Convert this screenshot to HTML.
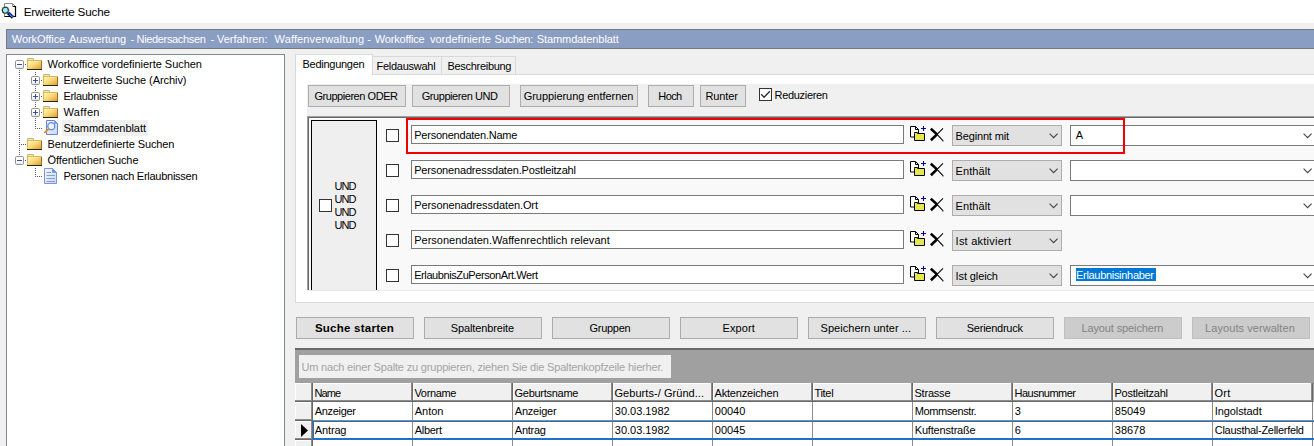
<!DOCTYPE html>
<html lang="de"><head><meta charset="utf-8"><title>Erweiterte Suche</title>
<style>
html,body{margin:0;padding:0}
body{width:1314px;height:446px;overflow:hidden;background:#f0f0f0;position:relative;font-family:"Liberation Sans", sans-serif;font-size:11px}
#r{position:absolute;left:0;top:0;width:1314px;height:446px;overflow:hidden}
#r div,#r svg,#r span{position:absolute;display:block}
.t{white-space:pre;line-height:16px;height:16px}
</style></head><body><div id="r">
<div style="left:0px;top:0px;width:1314px;height:23px;background:#fff"></div>
<svg style="left:0;top:0" width="20" height="20" viewBox="0 0 20 20">
<path d="M4.500 3.500H12.500L15.500 6.500V16.500H4.500Z" fill="#fff" stroke="#8a8a8a" stroke-width="1"/>
<path d="M12.500 3.500V6.500H15.500" fill="none" stroke="#8a8a8a" stroke-width="1"/>
<path d="M13 6.500H15.500V16.500H4.500" fill="none" stroke="#000" stroke-width="1.200"/>
<path d="M8 12.800L13 17.500" stroke="#000" stroke-width="3.200" stroke-linecap="butt"/>
<path d="M8.600 12.600L13.300 17" stroke="#1030ff" stroke-width="1.800"/>
<path d="M9.600 14.600L12.600 17.300" stroke="#30e8ff" stroke-width=".8"/>
<circle cx="5.400" cy="10.200" r="3" fill="#8ff4f4" stroke="#222" stroke-width="1.100"/>
<circle cx="5.400" cy="10.200" r="3.700" fill="none" stroke="#777" stroke-width=".5"/>
</svg>
<div style="left:6px;top:29px;width:1320px;height:20px;background:#8a9dc3;border:1px solid #787878;box-sizing:border-box;border-right:none"></div>
<div style="left:6px;top:54px;width:279px;height:400px;background:#fff;border:1px solid #828790;box-sizing:border-box"></div>
<svg style="left:0;top:0" width="0" height="0"><defs><linearGradient id="fg" x1="0" y1="0" x2="1" y2="1"><stop offset="0" stop-color="#fff6c4"/><stop offset="0.45" stop-color="#fbdb7e"/><stop offset="1" stop-color="#e09a22"/></linearGradient>
<linearGradient id="dg" x1="0" y1="0" x2="1" y2="1"><stop offset="0" stop-color="#f2f8ff"/><stop offset="1" stop-color="#c4dcf6"/></linearGradient>
<linearGradient id="eb" x1="0" y1="0" x2="0" y2="1"><stop offset="0.5" stop-color="#fff"/><stop offset="1" stop-color="#e4e4e4"/></linearGradient></defs></svg>
<div style="left:19px;top:70px;width:1px;height:86px;background:repeating-linear-gradient(to bottom,#5a5a5a 0 1px,transparent 1px 2px)"></div>
<div style="left:35px;top:72px;width:1px;height:57px;background:repeating-linear-gradient(to bottom,#5a5a5a 0 1px,transparent 1px 2px)"></div>
<div style="left:35px;top:168px;width:1px;height:9px;background:repeating-linear-gradient(to bottom,#5a5a5a 0 1px,transparent 1px 2px)"></div>
<div style="left:25px;top:64px;width:1px;height:1px;background:repeating-linear-gradient(to right,#5a5a5a 0 1px,transparent 1px 2px)"></div>
<div style="left:41px;top:80px;width:1px;height:1px;background:repeating-linear-gradient(to right,#5a5a5a 0 1px,transparent 1px 2px)"></div>
<div style="left:41px;top:96px;width:1px;height:1px;background:repeating-linear-gradient(to right,#5a5a5a 0 1px,transparent 1px 2px)"></div>
<div style="left:41px;top:112px;width:1px;height:1px;background:repeating-linear-gradient(to right,#5a5a5a 0 1px,transparent 1px 2px)"></div>
<div style="left:35px;top:128px;width:7px;height:1px;background:repeating-linear-gradient(to right,#5a5a5a 0 1px,transparent 1px 2px)"></div>
<div style="left:19px;top:144px;width:7px;height:1px;background:repeating-linear-gradient(to right,#5a5a5a 0 1px,transparent 1px 2px)"></div>
<div style="left:25px;top:160px;width:1px;height:1px;background:repeating-linear-gradient(to right,#5a5a5a 0 1px,transparent 1px 2px)"></div>
<div style="left:35px;top:176px;width:7px;height:1px;background:repeating-linear-gradient(to right,#5a5a5a 0 1px,transparent 1px 2px)"></div>
<div style="left:62px;top:120px;width:86px;height:16px;background:#f0f0f0"></div>
<svg style="left:15px;top:60px" width="9" height="9" viewBox="0 0 9 9"><rect x=".5" y=".5" width="8" height="8" rx="1.200" fill="url(#eb)" stroke="#919191"/><path d="M2 4.500h5" stroke="#3b4f9e" stroke-width="1"/></svg>
<svg style="left:27px;top:56px" width="16" height="16" viewBox="0 0 16 16">
<path d="M.5 4.500V3Q.5 2.500 1 2.500H6Q6.500 2.500 6.500 3V4.500" fill="#fbeeb2" stroke="#cdb06a" stroke-width="1"/>
<rect x=".5" y="4.500" width="14" height="9" fill="url(#fg)" stroke="#d9b55e" stroke-width="1"/>
<path d="M0 13.500H15" stroke="#2e2208" stroke-width="1"/><path d="M14.500 5V13" stroke="#94701f" stroke-width="1"/>
</svg>
<svg style="left:31px;top:76px" width="9" height="9" viewBox="0 0 9 9"><rect x=".5" y=".5" width="8" height="8" rx="1.200" fill="url(#eb)" stroke="#919191"/><path d="M2 4.500h5" stroke="#3b4f9e" stroke-width="1"/><path d="M4.500 2v5" stroke="#3b4f9e" stroke-width="1"/></svg>
<svg style="left:43px;top:72px" width="16" height="16" viewBox="0 0 16 16">
<path d="M.5 4.500V3Q.5 2.500 1 2.500H6Q6.500 2.500 6.500 3V4.500" fill="#fbeeb2" stroke="#cdb06a" stroke-width="1"/>
<rect x=".5" y="4.500" width="14" height="9" fill="url(#fg)" stroke="#d9b55e" stroke-width="1"/>
<path d="M0 13.500H15" stroke="#2e2208" stroke-width="1"/><path d="M14.500 5V13" stroke="#94701f" stroke-width="1"/>
</svg>
<svg style="left:31px;top:92px" width="9" height="9" viewBox="0 0 9 9"><rect x=".5" y=".5" width="8" height="8" rx="1.200" fill="url(#eb)" stroke="#919191"/><path d="M2 4.500h5" stroke="#3b4f9e" stroke-width="1"/><path d="M4.500 2v5" stroke="#3b4f9e" stroke-width="1"/></svg>
<svg style="left:43px;top:88px" width="16" height="16" viewBox="0 0 16 16">
<path d="M.5 4.500V3Q.5 2.500 1 2.500H6Q6.500 2.500 6.500 3V4.500" fill="#fbeeb2" stroke="#cdb06a" stroke-width="1"/>
<rect x=".5" y="4.500" width="14" height="9" fill="url(#fg)" stroke="#d9b55e" stroke-width="1"/>
<path d="M0 13.500H15" stroke="#2e2208" stroke-width="1"/><path d="M14.500 5V13" stroke="#94701f" stroke-width="1"/>
</svg>
<svg style="left:31px;top:108px" width="9" height="9" viewBox="0 0 9 9"><rect x=".5" y=".5" width="8" height="8" rx="1.200" fill="url(#eb)" stroke="#919191"/><path d="M2 4.500h5" stroke="#3b4f9e" stroke-width="1"/><path d="M4.500 2v5" stroke="#3b4f9e" stroke-width="1"/></svg>
<svg style="left:43px;top:104px" width="16" height="16" viewBox="0 0 16 16">
<path d="M.5 4.500V3Q.5 2.500 1 2.500H6Q6.500 2.500 6.500 3V4.500" fill="#fbeeb2" stroke="#cdb06a" stroke-width="1"/>
<rect x=".5" y="4.500" width="14" height="9" fill="url(#fg)" stroke="#d9b55e" stroke-width="1"/>
<path d="M0 13.500H15" stroke="#2e2208" stroke-width="1"/><path d="M14.500 5V13" stroke="#94701f" stroke-width="1"/>
</svg>
<svg style="left:43px;top:120px" width="16" height="16" viewBox="0 0 16 16">
<path d="M3.500 .5h8l3 3v11h-11z" fill="url(#dg)" stroke="#6f82d2" stroke-width="1"/>
<path d="M11.500 .5v3h3z" fill="#5a9cec" stroke="#6f8fe0" stroke-width=".5"/>
<circle cx="8.300" cy="6.200" r="3.500" fill="#e8f4ff" stroke="#6a88da" stroke-width="1.300"/>
<path d="M5.600 9l-3.800 3.400" stroke="#e08a2a" stroke-width="1.700" stroke-linecap="round"/></svg>
<svg style="left:27px;top:136px" width="16" height="16" viewBox="0 0 16 16">
<path d="M.5 4.500V3Q.5 2.500 1 2.500H6Q6.500 2.500 6.500 3V4.500" fill="#fbeeb2" stroke="#cdb06a" stroke-width="1"/>
<rect x=".5" y="4.500" width="14" height="9" fill="url(#fg)" stroke="#d9b55e" stroke-width="1"/>
<path d="M0 13.500H15" stroke="#2e2208" stroke-width="1"/><path d="M14.500 5V13" stroke="#94701f" stroke-width="1"/>
</svg>
<svg style="left:15px;top:156px" width="9" height="9" viewBox="0 0 9 9"><rect x=".5" y=".5" width="8" height="8" rx="1.200" fill="url(#eb)" stroke="#919191"/><path d="M2 4.500h5" stroke="#3b4f9e" stroke-width="1"/></svg>
<svg style="left:27px;top:152px" width="16" height="16" viewBox="0 0 16 16">
<path d="M.5 4.500V3Q.5 2.500 1 2.500H6Q6.500 2.500 6.500 3V4.500" fill="#fbeeb2" stroke="#cdb06a" stroke-width="1"/>
<rect x=".5" y="4.500" width="14" height="9" fill="url(#fg)" stroke="#d9b55e" stroke-width="1"/>
<path d="M0 13.500H15" stroke="#2e2208" stroke-width="1"/><path d="M14.500 5V13" stroke="#94701f" stroke-width="1"/>
</svg>
<svg style="left:44px;top:168px" width="14" height="16" viewBox="0 0 14 16">
<path d="M.5 .5h8l4 4v11h-12z" fill="url(#dg)" stroke="#8191d8" stroke-width="1"/>
<path d="M8.500 .5v4h4z" fill="#4f97ea" stroke="#6f8fe0" stroke-width=".6"/>
<path d="M2.500 4.500h4.500M2.500 7.500h8.500M2.500 10.500h8.500M2.500 13.500h8.500" stroke="#8e9ad6" stroke-width="1"/></svg>
<div style="left:295px;top:74px;width:1030px;height:229px;background:#fff;border:1px solid #dadada;box-sizing:border-box;border-right:none"></div>
<div style="left:372px;top:56px;width:70px;height:19px;background:#f0f0f0;border:1px solid #d9d9d9;box-sizing:border-box;border-bottom:1px solid #dadada"></div>
<div style="left:441px;top:56px;width:75px;height:19px;background:#f0f0f0;border:1px solid #d9d9d9;box-sizing:border-box;border-bottom:1px solid #dadada"></div>
<div style="left:295px;top:54px;width:78px;height:21px;background:#fff;border:1px solid #d9d9d9;border-bottom:none;box-sizing:border-box"></div>
<div style="left:307px;top:84px;width:1010px;height:207px;background:#f0f0f0"></div>
<div style="left:308px;top:85px;width:98px;height:22px;background:#e1e1e1;border:1px solid #adadad;box-sizing:border-box"></div>
<div style="left:412px;top:85px;width:98px;height:22px;background:#e1e1e1;border:1px solid #adadad;box-sizing:border-box"></div>
<div style="left:520px;top:85px;width:118px;height:22px;background:#e1e1e1;border:1px solid #adadad;box-sizing:border-box"></div>
<div style="left:648px;top:85px;width:46px;height:22px;background:#e1e1e1;border:1px solid #adadad;box-sizing:border-box"></div>
<div style="left:700px;top:85px;width:46px;height:22px;background:#e1e1e1;border:1px solid #adadad;box-sizing:border-box"></div>
<svg style="left:759px;top:88px" width="13" height="13" viewBox="0 0 13 13"><rect x=".5" y=".5" width="12" height="12" fill="#fff" stroke="#333"/><path d="M2.200 6.300L5.100 9.200L10.800 3.200" fill="none" stroke="#2a2a2a" stroke-width="1.300"/></svg>
<div style="left:307px;top:116px;width:1010px;height:180px;background:#f9f9f9;border-left:1px solid #a0a0a0;border-top:1px solid #a0a0a0;box-sizing:border-box"></div>
<div style="left:308px;top:117px;width:1010px;height:180px;background:#f9f9f9;border-left:1px solid #696969;border-top:1px solid #696969;box-sizing:border-box"></div>
<div style="left:311px;top:120px;width:66px;height:180px;background:#efefef;border:1px solid #000;box-sizing:border-box"></div>
<svg style="left:319px;top:199px" width="13" height="13" viewBox="0 0 13 13"><rect x=".5" y=".5" width="12" height="12" fill="#fff" stroke="#333"/></svg>
<svg style="left:386px;top:129px" width="13" height="13" viewBox="0 0 13 13"><rect x=".5" y=".5" width="12" height="12" fill="#fff" stroke="#333"/></svg>
<div style="left:411px;top:125px;width:493px;height:19px;background:#fff;border:1px solid #7a7a7a;box-sizing:border-box"></div>
<svg style="left:910px;top:126px" width="17" height="16" viewBox="0 0 17 16">
<path d="M.5 .5h5l3 3v7.500h-8z" fill="#fff" stroke="#000" stroke-width="1"/>
<path d="M5.500 .5v3h3" fill="none" stroke="#000" stroke-width="1"/>
<path d="M4.500 7.500v-1h3v1h7v7h-10z" fill="#e6e650" stroke="#000" stroke-width="1"/>
<path d="M11 2.500h5M13.500 0v5" stroke="#0000a8" stroke-width="1.100"/>
</svg>
<svg style="left:930px;top:127px" width="14" height="15" viewBox="0 0 14 15">
<path d="M.8 1.600L7 7.400" stroke="#000" stroke-width="2.600"/><path d="M7 7.400L12.700 13.400" stroke="#000" stroke-width="1.100"/>
<path d="M13 1.300L7 7.400" stroke="#000" stroke-width="1.100"/><path d="M7 7.400L.9 13.300" stroke="#000" stroke-width="2.600"/>
<rect x="12.300" y="13.200" width="1.200" height="1.200" fill="#000"/></svg>
<div style="left:952px;top:125px;width:110px;height:21px;background:#e1e1e1;border:1px solid #adadad;box-sizing:border-box"></div>
<svg style="left:1048.5px;top:133px" width="10" height="6" viewBox="0 0 10 6"><path d="M.6 .7l4 4l4-4" fill="none" stroke="#444" stroke-width="1.100"/></svg>
<div style="left:1070px;top:125px;width:260px;height:21px;background:#fff;border:1px solid #7a7a7a;box-sizing:border-box"></div>
<svg style="left:1303.4px;top:133px" width="10" height="6" viewBox="0 0 10 6"><path d="M.6 .7l4 4l4-4" fill="none" stroke="#444" stroke-width="1.100"/></svg>
<svg style="left:386px;top:164px" width="13" height="13" viewBox="0 0 13 13"><rect x=".5" y=".5" width="12" height="12" fill="#fff" stroke="#333"/></svg>
<div style="left:411px;top:160px;width:493px;height:19px;background:#fff;border:1px solid #7a7a7a;box-sizing:border-box"></div>
<svg style="left:910px;top:161px" width="17" height="16" viewBox="0 0 17 16">
<path d="M.5 .5h5l3 3v7.500h-8z" fill="#fff" stroke="#000" stroke-width="1"/>
<path d="M5.500 .5v3h3" fill="none" stroke="#000" stroke-width="1"/>
<path d="M4.500 7.500v-1h3v1h7v7h-10z" fill="#e6e650" stroke="#000" stroke-width="1"/>
<path d="M11 2.500h5M13.500 0v5" stroke="#0000a8" stroke-width="1.100"/>
</svg>
<svg style="left:930px;top:162px" width="14" height="15" viewBox="0 0 14 15">
<path d="M.8 1.600L7 7.400" stroke="#000" stroke-width="2.600"/><path d="M7 7.400L12.700 13.400" stroke="#000" stroke-width="1.100"/>
<path d="M13 1.300L7 7.400" stroke="#000" stroke-width="1.100"/><path d="M7 7.400L.9 13.300" stroke="#000" stroke-width="2.600"/>
<rect x="12.300" y="13.200" width="1.200" height="1.200" fill="#000"/></svg>
<div style="left:952px;top:160px;width:110px;height:21px;background:#e1e1e1;border:1px solid #adadad;box-sizing:border-box"></div>
<svg style="left:1048.5px;top:168px" width="10" height="6" viewBox="0 0 10 6"><path d="M.6 .7l4 4l4-4" fill="none" stroke="#444" stroke-width="1.100"/></svg>
<div style="left:1070px;top:160px;width:260px;height:21px;background:#fff;border:1px solid #7a7a7a;box-sizing:border-box"></div>
<svg style="left:1303.4px;top:168px" width="10" height="6" viewBox="0 0 10 6"><path d="M.6 .7l4 4l4-4" fill="none" stroke="#444" stroke-width="1.100"/></svg>
<svg style="left:386px;top:199px" width="13" height="13" viewBox="0 0 13 13"><rect x=".5" y=".5" width="12" height="12" fill="#fff" stroke="#333"/></svg>
<div style="left:411px;top:195px;width:493px;height:19px;background:#fff;border:1px solid #7a7a7a;box-sizing:border-box"></div>
<svg style="left:910px;top:196px" width="17" height="16" viewBox="0 0 17 16">
<path d="M.5 .5h5l3 3v7.500h-8z" fill="#fff" stroke="#000" stroke-width="1"/>
<path d="M5.500 .5v3h3" fill="none" stroke="#000" stroke-width="1"/>
<path d="M4.500 7.500v-1h3v1h7v7h-10z" fill="#e6e650" stroke="#000" stroke-width="1"/>
<path d="M11 2.500h5M13.500 0v5" stroke="#0000a8" stroke-width="1.100"/>
</svg>
<svg style="left:930px;top:197px" width="14" height="15" viewBox="0 0 14 15">
<path d="M.8 1.600L7 7.400" stroke="#000" stroke-width="2.600"/><path d="M7 7.400L12.700 13.400" stroke="#000" stroke-width="1.100"/>
<path d="M13 1.300L7 7.400" stroke="#000" stroke-width="1.100"/><path d="M7 7.400L.9 13.300" stroke="#000" stroke-width="2.600"/>
<rect x="12.300" y="13.200" width="1.200" height="1.200" fill="#000"/></svg>
<div style="left:952px;top:195px;width:110px;height:21px;background:#e1e1e1;border:1px solid #adadad;box-sizing:border-box"></div>
<svg style="left:1048.5px;top:203px" width="10" height="6" viewBox="0 0 10 6"><path d="M.6 .7l4 4l4-4" fill="none" stroke="#444" stroke-width="1.100"/></svg>
<div style="left:1070px;top:195px;width:260px;height:21px;background:#fff;border:1px solid #7a7a7a;box-sizing:border-box"></div>
<svg style="left:1303.4px;top:203px" width="10" height="6" viewBox="0 0 10 6"><path d="M.6 .7l4 4l4-4" fill="none" stroke="#444" stroke-width="1.100"/></svg>
<svg style="left:386px;top:234px" width="13" height="13" viewBox="0 0 13 13"><rect x=".5" y=".5" width="12" height="12" fill="#fff" stroke="#333"/></svg>
<div style="left:411px;top:230px;width:493px;height:19px;background:#fff;border:1px solid #7a7a7a;box-sizing:border-box"></div>
<svg style="left:910px;top:231px" width="17" height="16" viewBox="0 0 17 16">
<path d="M.5 .5h5l3 3v7.500h-8z" fill="#fff" stroke="#000" stroke-width="1"/>
<path d="M5.500 .5v3h3" fill="none" stroke="#000" stroke-width="1"/>
<path d="M4.500 7.500v-1h3v1h7v7h-10z" fill="#e6e650" stroke="#000" stroke-width="1"/>
<path d="M11 2.500h5M13.500 0v5" stroke="#0000a8" stroke-width="1.100"/>
</svg>
<svg style="left:930px;top:232px" width="14" height="15" viewBox="0 0 14 15">
<path d="M.8 1.600L7 7.400" stroke="#000" stroke-width="2.600"/><path d="M7 7.400L12.700 13.400" stroke="#000" stroke-width="1.100"/>
<path d="M13 1.300L7 7.400" stroke="#000" stroke-width="1.100"/><path d="M7 7.400L.9 13.300" stroke="#000" stroke-width="2.600"/>
<rect x="12.300" y="13.200" width="1.200" height="1.200" fill="#000"/></svg>
<div style="left:952px;top:230px;width:110px;height:21px;background:#e1e1e1;border:1px solid #adadad;box-sizing:border-box"></div>
<svg style="left:1048.5px;top:238px" width="10" height="6" viewBox="0 0 10 6"><path d="M.6 .7l4 4l4-4" fill="none" stroke="#444" stroke-width="1.100"/></svg>
<svg style="left:386px;top:269px" width="13" height="13" viewBox="0 0 13 13"><rect x=".5" y=".5" width="12" height="12" fill="#fff" stroke="#333"/></svg>
<div style="left:411px;top:265px;width:493px;height:19px;background:#fff;border:1px solid #7a7a7a;box-sizing:border-box"></div>
<svg style="left:910px;top:266px" width="17" height="16" viewBox="0 0 17 16">
<path d="M.5 .5h5l3 3v7.500h-8z" fill="#fff" stroke="#000" stroke-width="1"/>
<path d="M5.500 .5v3h3" fill="none" stroke="#000" stroke-width="1"/>
<path d="M4.500 7.500v-1h3v1h7v7h-10z" fill="#e6e650" stroke="#000" stroke-width="1"/>
<path d="M11 2.500h5M13.500 0v5" stroke="#0000a8" stroke-width="1.100"/>
</svg>
<svg style="left:930px;top:267px" width="14" height="15" viewBox="0 0 14 15">
<path d="M.8 1.600L7 7.400" stroke="#000" stroke-width="2.600"/><path d="M7 7.400L12.700 13.400" stroke="#000" stroke-width="1.100"/>
<path d="M13 1.300L7 7.400" stroke="#000" stroke-width="1.100"/><path d="M7 7.400L.9 13.300" stroke="#000" stroke-width="2.600"/>
<rect x="12.300" y="13.200" width="1.200" height="1.200" fill="#000"/></svg>
<div style="left:952px;top:265px;width:110px;height:21px;background:#e1e1e1;border:1px solid #adadad;box-sizing:border-box"></div>
<svg style="left:1048.5px;top:273px" width="10" height="6" viewBox="0 0 10 6"><path d="M.6 .7l4 4l4-4" fill="none" stroke="#444" stroke-width="1.100"/></svg>
<div style="left:1070px;top:265px;width:260px;height:21px;background:#fff;border:1px solid #7a7a7a;box-sizing:border-box"></div>
<svg style="left:1303.4px;top:273px" width="10" height="6" viewBox="0 0 10 6"><path d="M.6 .7l4 4l4-4" fill="none" stroke="#444" stroke-width="1.100"/></svg>
<div style="left:1076px;top:268px;width:80px;height:13px;background:#0078d7"></div>
<div style="left:406px;top:118px;width:719px;height:36px;border:2px solid #f00000;box-sizing:border-box"></div>
<div style="left:296px;top:290px;width:1030px;height:12px;background:#fff"></div>
<div style="left:307px;top:290px;width:1010px;height:1px;background:#e9e9e9"></div>
<div style="left:295px;top:302px;width:1030px;height:1px;background:#dadada"></div>
<div style="left:295px;top:303px;width:1030px;height:45px;background:#f0f0f0"></div>
<div style="left:296px;top:317px;width:118px;height:22px;background:#e1e1e1;border:1px solid #adadad;box-sizing:border-box"></div>
<div style="left:424px;top:317px;width:118px;height:22px;background:#e1e1e1;border:1px solid #adadad;box-sizing:border-box"></div>
<div style="left:552px;top:317px;width:118px;height:22px;background:#e1e1e1;border:1px solid #adadad;box-sizing:border-box"></div>
<div style="left:680px;top:317px;width:118px;height:22px;background:#e1e1e1;border:1px solid #adadad;box-sizing:border-box"></div>
<div style="left:808px;top:317px;width:118px;height:22px;background:#e1e1e1;border:1px solid #adadad;box-sizing:border-box"></div>
<div style="left:936px;top:317px;width:118px;height:22px;background:#e1e1e1;border:1px solid #adadad;box-sizing:border-box"></div>
<div style="left:1064px;top:317px;width:118px;height:22px;background:#cccccc;border:1px solid #bfbfbf;box-sizing:border-box"></div>
<div style="left:1192px;top:317px;width:118px;height:22px;background:#cccccc;border:1px solid #bfbfbf;box-sizing:border-box"></div>
<div style="left:295px;top:348px;width:1030px;height:110px;background:#a0a0a0;border-top:2px solid #696969;box-sizing:border-box"></div>
<div style="left:299px;top:355px;width:372px;height:23px;background:#f0f0f0"></div>
<div style="left:295px;top:402px;width:1030px;height:60px;background:#fff"></div>
<div style="left:295px;top:383px;width:18px;height:19px;background:#f0f0f0;box-shadow:inset -1px -1px 0 #696969,inset -2px -2px 0 #8c8c8c,inset 1px 1px 0 #fff;"></div>
<div style="left:313px;top:383px;width:100px;height:19px;background:#f0f0f0;box-shadow:inset -1px -1px 0 #696969,inset -2px -2px 0 #8c8c8c,inset 1px 1px 0 #fff;"></div>
<div style="left:413px;top:383px;width:100px;height:19px;background:#f0f0f0;box-shadow:inset -1px -1px 0 #696969,inset -2px -2px 0 #8c8c8c,inset 1px 1px 0 #fff;"></div>
<div style="left:513px;top:383px;width:100px;height:19px;background:#f0f0f0;box-shadow:inset -1px -1px 0 #696969,inset -2px -2px 0 #8c8c8c,inset 1px 1px 0 #fff;"></div>
<div style="left:613px;top:383px;width:100px;height:19px;background:#f0f0f0;box-shadow:inset -1px -1px 0 #696969,inset -2px -2px 0 #8c8c8c,inset 1px 1px 0 #fff;"></div>
<div style="left:713px;top:383px;width:100px;height:19px;background:#f0f0f0;box-shadow:inset -1px -1px 0 #696969,inset -2px -2px 0 #8c8c8c,inset 1px 1px 0 #fff;"></div>
<div style="left:813px;top:383px;width:100px;height:19px;background:#f0f0f0;box-shadow:inset -1px -1px 0 #696969,inset -2px -2px 0 #8c8c8c,inset 1px 1px 0 #fff;"></div>
<div style="left:913px;top:383px;width:100px;height:19px;background:#f0f0f0;box-shadow:inset -1px -1px 0 #696969,inset -2px -2px 0 #8c8c8c,inset 1px 1px 0 #fff;"></div>
<div style="left:1013px;top:383px;width:100px;height:19px;background:#f0f0f0;box-shadow:inset -1px -1px 0 #696969,inset -2px -2px 0 #8c8c8c,inset 1px 1px 0 #fff;"></div>
<div style="left:1113px;top:383px;width:100px;height:19px;background:#f0f0f0;box-shadow:inset -1px -1px 0 #696969,inset -2px -2px 0 #8c8c8c,inset 1px 1px 0 #fff;"></div>
<div style="left:1213px;top:383px;width:100px;height:19px;background:#f0f0f0;box-shadow:inset -1px -1px 0 #696969,inset -2px -2px 0 #8c8c8c,inset 1px 1px 0 #fff;"></div>
<div style="left:295px;top:402px;width:18px;height:19px;background:#f0f0f0;box-shadow:inset -1px -1px 0 #696969,inset -2px -2px 0 #8c8c8c,inset 1px 1px 0 #fff;"></div>
<div style="left:295px;top:421px;width:18px;height:19px;background:#f0f0f0;box-shadow:inset -1px -1px 0 #696969,inset -2px -2px 0 #8c8c8c,inset 1px 1px 0 #fff;"></div>
<div style="left:295px;top:440px;width:18px;height:19px;background:#f0f0f0;box-shadow:inset -1px -1px 0 #696969,inset -2px -2px 0 #8c8c8c,inset 1px 1px 0 #fff;"></div>
<div style="left:313px;top:420px;width:1010px;height:1px;background:#8c8c8c"></div>
<div style="left:313px;top:439px;width:1010px;height:1px;background:#8c8c8c"></div>
<div style="left:313px;top:458px;width:1010px;height:1px;background:#8c8c8c"></div>
<div style="left:412px;top:402px;width:1px;height:60px;background:#8c8c8c"></div>
<div style="left:512px;top:402px;width:1px;height:60px;background:#8c8c8c"></div>
<div style="left:612px;top:402px;width:1px;height:60px;background:#8c8c8c"></div>
<div style="left:712px;top:402px;width:1px;height:60px;background:#8c8c8c"></div>
<div style="left:812px;top:402px;width:1px;height:60px;background:#8c8c8c"></div>
<div style="left:912px;top:402px;width:1px;height:60px;background:#8c8c8c"></div>
<div style="left:1012px;top:402px;width:1px;height:60px;background:#8c8c8c"></div>
<div style="left:1112px;top:402px;width:1px;height:60px;background:#8c8c8c"></div>
<div style="left:1212px;top:402px;width:1px;height:60px;background:#8c8c8c"></div>
<div style="left:1312px;top:402px;width:1px;height:60px;background:#8c8c8c"></div>
<div style="left:313px;top:421px;width:1010px;height:19px;border:1px solid #1f6fcc;border-bottom-width:2px;box-sizing:border-box;border-right:none"></div>
<svg style="left:301px;top:424px" width="7" height="13" viewBox="0 0 7 13"><path d="M0 0l7 6.500l-7 6.500z" fill="#000"/></svg>
<span class="t" style="left:23.70px;top:3.5px;font-size:11.7px;color:#000;letter-spacing:-0.180px;">Erweiterte Suche</span>
<span class="t" style="left:11.80px;top:31.0px;font-size:11px;color:#fff;letter-spacing:-0.067px;">WorkOffice</span>
<span class="t" style="left:69.00px;top:31.0px;font-size:11px;color:#fff;letter-spacing:-0.099px;">Auswertung</span>
<span class="t" style="left:130.40px;top:31.0px;font-size:11px;color:#fff;">-</span>
<span class="t" style="left:136.60px;top:31.0px;font-size:11px;color:#fff;letter-spacing:-0.348px;">Niedersachsen</span>
<span class="t" style="left:210.50px;top:31.0px;font-size:11px;color:#fff;">-</span>
<span class="t" style="left:217.10px;top:31.0px;font-size:11px;color:#fff;letter-spacing:-0.041px;">Verfahren:</span>
<span class="t" style="left:274.60px;top:31.0px;font-size:11px;color:#fff;letter-spacing:0.131px;">Waffenverwaltung</span>
<span class="t" style="left:367.20px;top:31.0px;font-size:11px;color:#fff;">-</span>
<span class="t" style="left:374.80px;top:31.0px;font-size:11px;color:#fff;letter-spacing:-0.185px;">Workoffice</span>
<span class="t" style="left:429.90px;top:31.0px;font-size:11px;color:#fff;letter-spacing:0.038px;">vordefinierte</span>
<span class="t" style="left:494.60px;top:31.0px;font-size:11px;color:#fff;letter-spacing:-0.296px;">Suchen:</span>
<span class="t" style="left:536.70px;top:31.0px;font-size:11px;color:#fff;letter-spacing:-0.068px;">Stammdatenblatt</span>
<span class="t" style="left:47.50px;top:56.0px;font-size:11px;color:#000;letter-spacing:-0.034px;">Workoffice vordefinierte Suchen</span>
<span class="t" style="left:63.50px;top:72.0px;font-size:11px;color:#000;letter-spacing:-0.072px;">Erweiterte Suche (Archiv)</span>
<span class="t" style="left:63.50px;top:88.0px;font-size:11px;color:#000;letter-spacing:-0.348px;">Erlaubnisse</span>
<span class="t" style="left:63.50px;top:104.0px;font-size:11px;color:#000;letter-spacing:0.350px;">Waffen</span>
<span class="t" style="left:63.50px;top:120.0px;font-size:11px;color:#000;letter-spacing:-0.047px;">Stammdatenblatt</span>
<span class="t" style="left:47.50px;top:136.0px;font-size:11px;color:#000;letter-spacing:-0.111px;">Benutzerdefinierte Suchen</span>
<span class="t" style="left:47.50px;top:152.0px;font-size:11px;color:#000;letter-spacing:-0.103px;">Öffentlichen Suche</span>
<span class="t" style="left:63.50px;top:168.0px;font-size:11px;color:#000;letter-spacing:-0.266px;">Personen nach Erlaubnissen</span>
<span class="t" style="left:302.50px;top:56.0px;font-size:11px;color:#000;letter-spacing:-0.264px;">Bedingungen</span>
<span class="t" style="left:376.50px;top:58.0px;font-size:11px;color:#000;letter-spacing:-0.267px;">Feldauswahl</span>
<span class="t" style="left:447.40px;top:58.0px;font-size:11px;color:#000;letter-spacing:-0.289px;">Beschreibung</span>
<span class="t" style="left:314.40px;top:88.0px;font-size:11px;color:#000;letter-spacing:-0.448px;">Gruppieren ODER</span>
<span class="t" style="left:421.70px;top:88.0px;font-size:11px;color:#000;letter-spacing:-0.432px;">Gruppieren UND</span>
<span class="t" style="left:523.70px;top:88.0px;font-size:11px;color:#000;letter-spacing:-0.049px;">Gruppierung entfernen</span>
<span class="t" style="left:658.30px;top:88.0px;font-size:11px;color:#000;letter-spacing:-0.596px;">Hoch</span>
<span class="t" style="left:705.50px;top:88.0px;font-size:11px;color:#000;letter-spacing:-0.106px;">Runter</span>
<span class="t" style="left:774.60px;top:87.0px;font-size:11px;color:#000;letter-spacing:-0.318px;">Reduzieren</span>
<span class="t" style="left:334.50px;top:178.0px;font-size:11px;color:#000;letter-spacing:-0.900px;">UND</span>
<span class="t" style="left:334.50px;top:191.0px;font-size:11px;color:#000;letter-spacing:-0.900px;">UND</span>
<span class="t" style="left:334.50px;top:204.0px;font-size:11px;color:#000;letter-spacing:-0.900px;">UND</span>
<span class="t" style="left:334.50px;top:217.0px;font-size:11px;color:#000;letter-spacing:-0.900px;">UND</span>
<span class="t" style="left:414.20px;top:127.0px;font-size:11px;color:#000;letter-spacing:-0.224px;">Personendaten.Name</span>
<span class="t" style="left:955.60px;top:128.0px;font-size:11px;color:#000;letter-spacing:-0.163px;">Beginnt mit</span>
<span class="t" style="left:1075.70px;top:127.0px;font-size:11px;color:#000;">A</span>
<span class="t" style="left:414.20px;top:162.0px;font-size:11px;color:#000;letter-spacing:-0.166px;">Personenadressdaten.Postleitzahl</span>
<span class="t" style="left:955.60px;top:163.0px;font-size:11px;color:#000;letter-spacing:0.075px;">Enthält</span>
<span class="t" style="left:414.20px;top:197.0px;font-size:11px;color:#000;letter-spacing:-0.099px;">Personenadressdaten.Ort</span>
<span class="t" style="left:955.60px;top:198.0px;font-size:11px;color:#000;letter-spacing:0.075px;">Enthält</span>
<span class="t" style="left:414.20px;top:232.0px;font-size:11px;color:#000;letter-spacing:0.012px;">Personendaten.Waffenrechtlich relevant</span>
<span class="t" style="left:955.60px;top:233.0px;font-size:11px;color:#000;letter-spacing:0.235px;">Ist aktiviert</span>
<span class="t" style="left:414.20px;top:267.0px;font-size:11px;color:#000;letter-spacing:-0.412px;">ErlaubnisZuPersonArt.Wert</span>
<span class="t" style="left:955.60px;top:268.0px;font-size:11px;color:#000;letter-spacing:-0.114px;">Ist gleich</span>
<span class="t" style="left:1076.00px;top:267.0px;font-size:11px;color:#fff;letter-spacing:-0.304px;">Erlaubnisinhaber</span>
<span class="t" style="left:314.90px;top:320.0px;font-size:11.5px;color:#000;font-weight:700;letter-spacing:0.245px;">Suche starten</span>
<span class="t" style="left:450.70px;top:320.0px;font-size:11px;color:#000;letter-spacing:-0.111px;">Spaltenbreite</span>
<span class="t" style="left:589.60px;top:320.0px;font-size:11px;color:#000;letter-spacing:-0.302px;">Gruppen</span>
<span class="t" style="left:722.60px;top:320.0px;font-size:11px;color:#000;letter-spacing:0.081px;">Export</span>
<span class="t" style="left:820.60px;top:320.0px;font-size:11px;color:#000;letter-spacing:0.028px;">Speichern unter ...</span>
<span class="t" style="left:966.80px;top:320.0px;font-size:11px;color:#000;letter-spacing:-0.260px;">Seriendruck</span>
<span class="t" style="left:1081.50px;top:320.0px;font-size:11px;color:#838383;letter-spacing:-0.125px;">Layout speichern</span>
<span class="t" style="left:1205.10px;top:320.0px;font-size:11px;color:#838383;letter-spacing:0.064px;">Layouts verwalten</span>
<span class="t" style="left:301.40px;top:359.0px;font-size:11px;color:#a3a3a3;letter-spacing:-0.171px;">Um nach einer Spalte zu gruppieren, ziehen Sie die Spaltenkopfzeile hierher.</span>
<span class="t" style="left:314.50px;top:385.0px;font-size:11px;color:#000;letter-spacing:-0.900px;">Name</span>
<span class="t" style="left:414.50px;top:385.0px;font-size:11px;color:#000;letter-spacing:-0.355px;">Vorname</span>
<span class="t" style="left:514.50px;top:385.0px;font-size:11px;color:#000;letter-spacing:-0.266px;">Geburtsname</span>
<span class="t" style="left:614.50px;top:385.0px;font-size:11px;color:#000;letter-spacing:0.050px;">Geburts-/ Gründ...</span>
<span class="t" style="left:714.50px;top:385.0px;font-size:11px;color:#000;letter-spacing:-0.186px;">Aktenzeichen</span>
<span class="t" style="left:814.50px;top:385.0px;font-size:11px;color:#000;letter-spacing:-0.319px;">Titel</span>
<span class="t" style="left:914.50px;top:385.0px;font-size:11px;color:#000;letter-spacing:-0.216px;">Strasse</span>
<span class="t" style="left:1014.50px;top:385.0px;font-size:11px;color:#000;letter-spacing:-0.503px;">Hausnummer</span>
<span class="t" style="left:1114.50px;top:385.0px;font-size:11px;color:#000;letter-spacing:-0.251px;">Postleitzahl</span>
<span class="t" style="left:1214.50px;top:385.0px;font-size:11px;color:#000;letter-spacing:0.309px;">Ort</span>
<span class="t" style="left:314.80px;top:403.0px;font-size:11px;color:#000;letter-spacing:-0.317px;">Anzeiger</span>
<span class="t" style="left:414.80px;top:403.0px;font-size:11px;color:#000;letter-spacing:-0.038px;">Anton</span>
<span class="t" style="left:514.80px;top:403.0px;font-size:11px;color:#000;letter-spacing:-0.232px;">Anzeiger</span>
<span class="t" style="left:614.80px;top:403.0px;font-size:11px;color:#000;letter-spacing:-0.018px;">30.03.1982</span>
<span class="t" style="left:714.80px;top:403.0px;font-size:11px;color:#000;letter-spacing:-0.023px;">00040</span>
<span class="t" style="left:914.80px;top:403.0px;font-size:11px;color:#000;letter-spacing:-0.422px;">Mommsenstr.</span>
<span class="t" style="left:1014.80px;top:403.0px;font-size:11px;color:#000;">3</span>
<span class="t" style="left:1114.80px;top:403.0px;font-size:11px;color:#000;letter-spacing:-0.023px;">85049</span>
<span class="t" style="left:1214.80px;top:403.0px;font-size:11px;color:#000;letter-spacing:-0.089px;">Ingolstadt</span>
<span class="t" style="left:314.80px;top:422.0px;font-size:11px;color:#000;letter-spacing:-0.144px;">Antrag</span>
<span class="t" style="left:414.80px;top:422.0px;font-size:11px;color:#000;letter-spacing:-0.310px;">Albert</span>
<span class="t" style="left:514.80px;top:422.0px;font-size:11px;color:#000;letter-spacing:-0.244px;">Antrag</span>
<span class="t" style="left:614.80px;top:422.0px;font-size:11px;color:#000;letter-spacing:-0.018px;">30.03.1982</span>
<span class="t" style="left:714.80px;top:422.0px;font-size:11px;color:#000;letter-spacing:-0.023px;">00045</span>
<span class="t" style="left:914.80px;top:422.0px;font-size:11px;color:#000;letter-spacing:-0.189px;">Kuftenstraße</span>
<span class="t" style="left:1014.80px;top:422.0px;font-size:11px;color:#000;">6</span>
<span class="t" style="left:1114.80px;top:422.0px;font-size:11px;color:#000;letter-spacing:-0.023px;">38678</span>
<span class="t" style="left:1214.80px;top:422.0px;font-size:11px;color:#000;letter-spacing:-0.293px;">Clausthal-Zellerfeld</span>
</div></body></html>
